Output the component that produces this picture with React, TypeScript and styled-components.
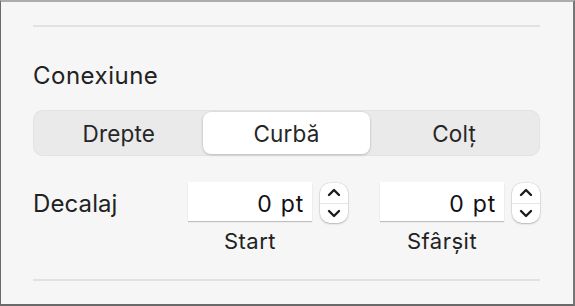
import React from "react";
import styled, { createGlobalStyle } from "styled-components";

const Global = createGlobalStyle`
  html, body { margin: 0; padding: 0; background: #f6f6f6; }
  body { font-family: Inter, "Noto Sans", "Liberation Sans", sans-serif; -webkit-font-smoothing: antialiased; }
`;

const Panel = styled.div`
  box-sizing: border-box;
  width: 575px;
  height: 306px;
  background: #f6f6f6;
  border-top: 2px solid #acacac;
  border-left: 1px solid #6a6a6a;
  border-right: 2px solid #767676;
  border-bottom: 2px solid #6a6a6a;
  padding: 23px 33px 0 32px;
  display: flex;
  flex-direction: column;
  color: #222;
`;

const Separator = styled.div<{ $top?: number }>`
  height: 2px;
  background: #e2e2e2;
  margin-top: ${(p) => p.$top ?? 0}px;
`;

const Title = styled.div`
  margin-top: 35px;
  font-size: 24px;
  line-height: 28px;
  height: 28px;
  letter-spacing: 0.5px;
`;

const Segmented = styled.div`
  margin-top: 20px;
  height: 46px;
  box-sizing: border-box;
  border-radius: 10px;
  background: #eaeaea;
  box-shadow: inset 0 0 0 1px #e3e3e3;
  padding: 2px;
  display: grid;
  grid-template-columns: repeat(3, 1fr);
`;

const Segment = styled.div<{ $active?: boolean }>`
  display: flex;
  align-items: center;
  justify-content: center;
  font-size: 22.5px;
  letter-spacing: 0.2px;
  color: #262626;
  border-radius: 8px;
  background: ${(p) => (p.$active ? "#ffffff" : "transparent")};
  box-shadow: ${(p) =>
    p.$active ? "0 1px 3px rgba(0,0,0,0.18), 0 0 0 0.5px rgba(0,0,0,0.06)" : "none"};
`;

const OffsetRow = styled.div`
  margin-top: 26px;
  display: grid;
  grid-template-columns: 123px 160px 160px;
  column-gap: 32px;
  align-items: start;
`;

const RowLabel = styled.div`
  font-size: 24px;
  line-height: 40px;
  height: 40px;
  padding-top: 2px;
  letter-spacing: 0.1px;
`;

const FieldGroup = styled.div`
  display: grid;
  grid-template-columns: 124px 28px;
  column-gap: 8px;
  row-gap: 7px;
`;

const Field = styled.div`
  height: 39px;
  box-sizing: border-box;
  background: #ffffff;
  box-shadow: 0 1px 1px rgba(0, 0, 0, 0.22);
  display: flex;
  align-items: center;
  justify-content: flex-end;
  padding: 4px 8px 0 0;
  font-size: 23px;
  letter-spacing: 0.8px;
  word-spacing: 1px;
  color: #111;
`;

const Stepper = styled.div`
  height: 40px;
  margin-top: 1px;
  background: #ffffff;
  border-radius: 10px;
  box-shadow: 0 0 0 0.5px rgba(0, 0, 0, 0.1), 0 1px 2px rgba(0, 0, 0, 0.22);
  display: flex;
  flex-direction: column;
  overflow: hidden;
`;

const StepHalf = styled.div<{ $bottom?: boolean }>`
  flex: 1;
  display: flex;
  align-items: center;
  justify-content: center;
  border-top: ${(p) => (p.$bottom ? "1px solid #e6e6e6" : "none")};
`;

const SubLabel = styled.div`
  font-size: 22px;
  line-height: 22px;
  letter-spacing: 0.5px;
  text-align: center;
`;

const Chevron = ({ down }: { down?: boolean }) => (
  <svg width="14" height="9" viewBox="0 0 14 9">
    <path
      d={down ? "M2 2 L7 7 L12 2" : "M2 7 L7 2 L12 7"}
      fill="none"
      stroke="#1c1c1c"
      strokeWidth="2.4"
      strokeLinecap="round"
      strokeLinejoin="round"
    />
  </svg>
);

const Offset = ({ value, label }: { value: string; label: string }) => (
  <FieldGroup>
    <Field>{value}</Field>
    <Stepper>
      <StepHalf>
        <Chevron />
      </StepHalf>
      <StepHalf $bottom>
        <Chevron down />
      </StepHalf>
    </Stepper>
    <SubLabel>{label}</SubLabel>
  </FieldGroup>
);

export default function App() {
  return (
    <>
      <Global />
      <Panel>
        <Separator />
        <Title>Conexiune</Title>
        <Segmented>
          <Segment>Drepte</Segment>
          <Segment $active>Curbă</Segment>
          <Segment>Colț</Segment>
        </Segmented>
        <OffsetRow>
          <RowLabel>Decalaj</RowLabel>
          <Offset value="0 pt" label="Start" />
          <Offset value="0 pt" label="Sfârșit" />
        </OffsetRow>
        <Separator $top={27} />
      </Panel>
    </>
  );
}
